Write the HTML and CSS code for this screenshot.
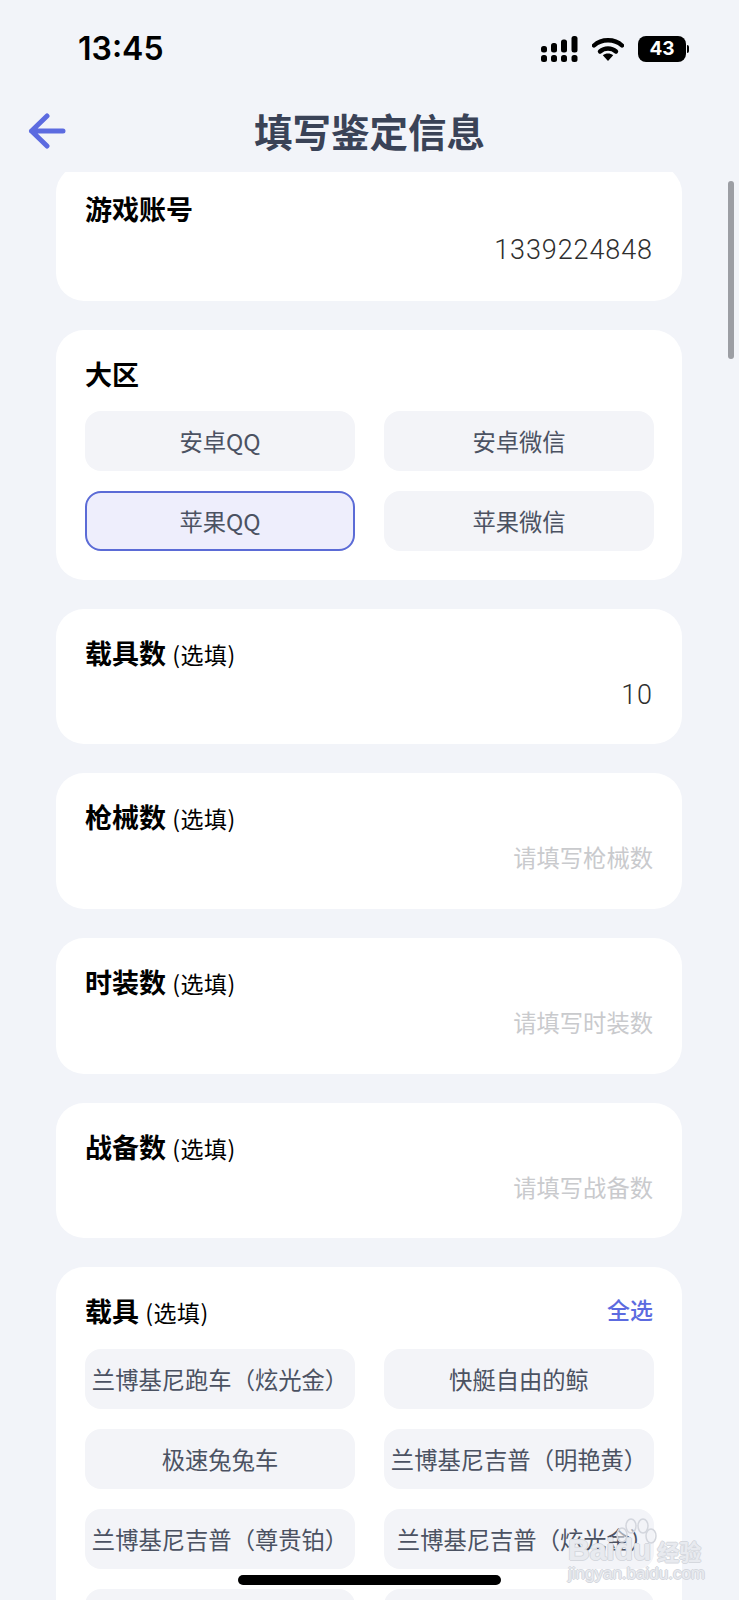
FILE: index.html
```html
<!DOCTYPE html>
<html lang="zh-CN">
<head>
  <meta charset="UTF-8">
  <meta name="viewport" content="width=device-width, initial-scale=1.0">
  <title>填写鉴定信息</title>
  <link rel="stylesheet" href="styles.css">
</head>
<body>
  <div class="status-bar">
    <div class="time">13:45</div>
    <div class="status-icons">
      <svg class="signal" width="37" height="26" viewBox="0 0 37 26">
        <g fill="#000">
          <rect x="0" y="10" width="6" height="6.5" rx="2.5"/>
          <rect x="0" y="19" width="6" height="7" rx="2.5"/>
          <rect x="10" y="7" width="6" height="9.5" rx="2.5"/>
          <rect x="10" y="19" width="6" height="7" rx="2.5"/>
          <rect x="20" y="3.5" width="6" height="13" rx="2.5"/>
          <rect x="20" y="19" width="6" height="7" rx="2.5"/>
          <rect x="30.5" y="0" width="6" height="16.5" rx="2.5"/>
          <rect x="30.5" y="19" width="6" height="7" rx="2.5"/>
        </g>
      </svg>
      <svg class="wifi" width="32" height="25" viewBox="0 0 32 25">
        <path d="M2 9.5C9.5 2.5 22.5 2.5 30 9.5" fill="none" stroke="#000" stroke-width="4.4" stroke-linecap="round"/>
        <path d="M8 15.5C12.5 11.5 19.5 11.5 24 15.5" fill="none" stroke="#000" stroke-width="4.4" stroke-linecap="round"/>
        <path d="M10.8 19.2C13.6 16.8 18.4 16.8 21.2 19.2L16 25Z" fill="#000"/>
      </svg>
      <div class="battery">
        <div class="battery-body">43</div>
        <div class="battery-tip"></div>
      </div>
    </div>
  </div>

  <div class="nav-bar">
    <svg class="back" width="38" height="36" viewBox="0 0 38 36">
      <path d="M19 3L3.5 18L19 33M3.5 18H35" fill="none" stroke="#5c6be0" stroke-width="5" stroke-linecap="round" stroke-linejoin="round"/>
    </svg>
    <h1>填写鉴定信息</h1>
  </div>

  <div class="scroll-area">
    <div class="scroll-content">
      <div class="card">
        <div class="card-title">游戏账号</div>
        <div class="value">1339224848</div>
      </div>

      <div class="card card-options">
        <div class="card-title">大区</div>
        <div class="options">
          <div class="option">安卓QQ</div>
          <div class="option">安卓微信</div>
          <div class="option selected">苹果QQ</div>
          <div class="option">苹果微信</div>
        </div>
      </div>

      <div class="card">
        <div class="card-title">载具数 <span class="optional">(选填)</span></div>
        <div class="value">10</div>
      </div>

      <div class="card">
        <div class="card-title">枪械数 <span class="optional">(选填)</span></div>
        <div class="value placeholder">请填写枪械数</div>
      </div>

      <div class="card">
        <div class="card-title">时装数 <span class="optional">(选填)</span></div>
        <div class="value placeholder">请填写时装数</div>
      </div>

      <div class="card">
        <div class="card-title">战备数 <span class="optional">(选填)</span></div>
        <div class="value placeholder">请填写战备数</div>
      </div>

      <div class="card card-options">
        <div class="card-head">
          <div class="card-title">载具 <span class="optional">(选填)</span></div>
          <div class="select-all">全选</div>
        </div>
        <div class="options">
          <div class="option">兰博基尼跑车（炫光金）</div>
          <div class="option">快艇自由的鲸</div>
          <div class="option">极速兔兔车</div>
          <div class="option">兰博基尼吉普（明艳黄）</div>
          <div class="option">兰博基尼吉普（尊贵铂）</div>
          <div class="option option-shift">兰博基尼吉普（炫光金）</div>
          <div class="option"></div>
          <div class="option"></div>
        </div>
      </div>
    </div>
  </div>

  <div class="scrollbar"></div>
  <div class="home-indicator"></div>

  <div class="watermark">
    <svg class="wm-paw" width="44" height="40" viewBox="0 0 44 40">
      <g fill="rgba(240,242,246,0.55)" stroke="#d3d6dd" stroke-width="1.5">
        <ellipse cx="8" cy="17" rx="5" ry="7"/>
        <ellipse cx="17" cy="8" rx="5" ry="7"/>
        <ellipse cx="29" cy="8" rx="5" ry="7"/>
        <ellipse cx="37" cy="18" rx="5" ry="7"/>
      </g>
    </svg>
    <div class="wm-logo">Baidu<span class="wm-cn">经验</span></div>
    <div class="wm-url">jingyan.baidu.com</div>
  </div>
</body>
</html>
```

FILE: styles.css
```css
* {
  box-sizing: border-box;
}

html, body {
  height: 100%;
}

body {
  height: 1600px;
  margin: 0;
  background-color: #f2f4f9;
  font-family: "Noto Sans CJK SC", "Noto Sans", sans-serif;
  overflow: hidden;
  position: relative;
  display: flex;
  flex-direction: column;
}

.status-bar {
  height: 100px;
  padding: 0 50px 3px 78px;
  display: flex;
  justify-content: space-between;
  align-items: center;
  flex-shrink: 0;
}

.time {
  font-family: Inter, sans-serif;
  font-size: 32px;
  font-weight: 600;
  color: #000;
}

.status-icons {
  display: flex;
  align-items: center;
  gap: 14px;
}

.battery {
  display: flex;
  align-items: center;
  gap: 1px;
}

.battery-body {
  width: 48px;
  height: 26px;
  border-radius: 8px;
  background-color: #000;
  color: #fff;
  font-family: Inter, sans-serif;
  font-size: 19px;
  font-weight: 700;
  line-height: 26px;
  text-align: center;
}

.battery-tip {
  width: 2px;
  height: 8px;
  background-color: #000;
  border-radius: 0 2px 2px 0;
}

.nav-bar {
  height: 72px;
  position: relative;
  display: flex;
  align-items: center;
  justify-content: center;
  flex-shrink: 0;
}

.nav-bar h1 {
  margin: 0 0 13px;
  font-size: 38.5px;
  font-weight: 700;
  line-height: 56px;
  color: #3a4357;
}

.back {
  position: absolute;
  left: 28px;
  top: 13px;
}

.scroll-area {
  flex: 1;
  overflow: hidden;
}

.scroll-content {
  margin-top: -7px;
  padding: 0 57px 0 56px;
  display: flex;
  flex-direction: column;
  gap: 29px;
}

.card {
  background-color: #fff;
  border-radius: 28px;
  padding: 25px 29px 0;
  height: 135.7px;
}

.card-options {
  height: auto;
  padding-bottom: 29px;
}

.card-title {
  font-size: 27px;
  font-weight: 700;
  line-height: 38px;
  color: #000;
}

.optional {
  font-size: 23px;
  font-weight: 400;
  letter-spacing: 0.5px;
}

.value {
  margin-top: 3px;
  font-family: Roboto, sans-serif;
  font-size: 27px;
  font-weight: 300;
  letter-spacing: 0.9px;
  line-height: 38px;
  text-align: right;
  color: #2e2e2e;
}

.placeholder {
  margin-top: 1px;
  font-family: "Noto Sans CJK SC", sans-serif;
  font-size: 23.3px;
  font-weight: 400;
  letter-spacing: 0;
  color: #c9cacd;
}

.card-head {
  display: flex;
  justify-content: space-between;
}

.select-all {
  font-size: 23px;
  font-weight: 500;
  color: #5c6be0;
}

.options {
  margin-top: 18px;
  display: grid;
  grid-template-columns: 270px 270px;
  gap: 20px 29px;
}

.option {
  height: 60px;
  border-radius: 16px;
  background-color: #f3f4f8;
  display: flex;
  align-items: center;
  justify-content: center;
  font-size: 23.3px;
  color: #4b5262;
  white-space: nowrap;
}

.option.selected {
  background-color: #eeeefc;
  border: 2px solid #5b6bd6;
}

.option-shift {
  padding-left: 12px;
}

.scrollbar {
  position: absolute;
  left: 728px;
  top: 181px;
  width: 5.5px;
  height: 178px;
  border-radius: 3px;
  background-color: #9c9ea4;
}

.home-indicator {
  position: absolute;
  left: 238px;
  top: 1575px;
  width: 263px;
  height: 10px;
  border-radius: 5px;
  background-color: #000;
}

.watermark {
  position: absolute;
  left: 568px;
  top: 1536px;
  color: rgba(238, 240, 245, 0.8);
  text-shadow: 1px 0 0 #d5d8de, -1px 0 0 #d5d8de, 0 1px 0 #d5d8de, 0 -1px 0 #d5d8de;
}

.wm-paw {
  position: absolute;
  left: 46px;
  top: -18px;
}

.wm-logo {
  font-family: "Liberation Sans", sans-serif;
  font-size: 30px;
  font-weight: 700;
  line-height: 28px;
  white-space: nowrap;
}

.wm-cn {
  font-family: "Noto Sans CJK SC", sans-serif;
  font-size: 22px;
  margin-left: 6px;
}

.wm-url {
  font-family: "Liberation Sans", sans-serif;
  font-size: 17px;
  line-height: 20px;
  white-space: nowrap;
}
```
